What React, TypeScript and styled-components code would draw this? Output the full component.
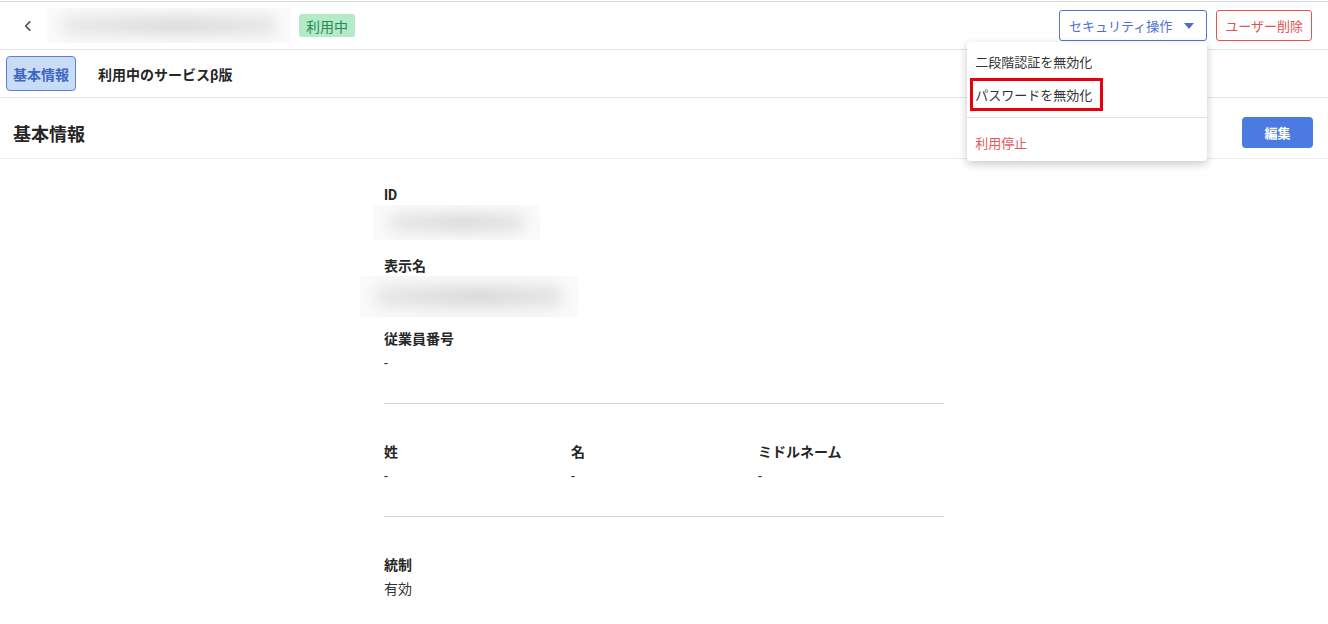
import styled, { createGlobalStyle } from 'styled-components'

const GlobalStyle = createGlobalStyle`
  html, body {
    margin: 0;
    padding: 0;
    background: #ffffff;
  }
  body {
    font-family: Roboto, "Noto Sans CJK JP", sans-serif;
    color: #2b2b2b;
  }
  * {
    box-sizing: border-box;
  }
`

const Page = styled.div`
  width: 1328px;
  height: 624px;
  overflow: hidden;
  padding-top: 1px;
  display: flex;
  flex-direction: column;
`

const Header = styled.header`
  height: 49px;
  flex-shrink: 0;
  display: flex;
  align-items: center;
  padding: 0 16px;
  border-top: 1px solid #d9d9d9;
  border-bottom: 1px solid #e3e3e3;
`

const BackButton = styled.button`
  width: 24px;
  height: 24px;
  display: flex;
  align-items: center;
  justify-content: center;
  border: none;
  padding: 0;
  background: transparent;
  color: #555;
  cursor: pointer;
`

// masked personal data: a soft grey smear on an off-white plate
const Blurred = styled.div<{ $width: number; $height: number }>`
  width: ${(p) => p.$width}px;
  height: ${(p) => p.$height}px;
  background: #fafafa;
  overflow: hidden;
  display: flex;
  align-items: center;
  padding: 0 14px;
  flex-shrink: 0;
`

const BlurInk = styled.div`
  flex: 1;
  height: 55%;
  border-radius: 12px;
  background: linear-gradient(90deg, #e8e8e8, #dadada 55%, #e6e6e6);
  filter: blur(7px);
`

const NameBlock = styled.div`
  margin-left: 7px;
`

const Badge = styled.span`
  margin-left: 8px;
  height: 23px;
  padding: 0 7px;
  display: inline-flex;
  align-items: center;
  border-radius: 3px;
  background: #b4eac8;
  color: #248a56;
  font-size: 14px;
`

const Spacer = styled.div`
  flex: 1;
`

const Actions = styled.div`
  display: flex;
  gap: 9px;
  align-items: center;
`

const MenuAnchor = styled.div`
  position: relative;
`

const OutlineButton = styled.button<{ $tone: 'blue' | 'red' }>`
  height: 31px;
  padding: 0 ${(p) => (p.$tone === 'blue' ? '12px 0 9px' : '8px')};
  display: flex;
  align-items: center;
  gap: 12px;
  border-radius: 3px;
  background: #fff;
  font-family: inherit;
  font-size: 13px;
  cursor: pointer;
  border: 1px solid ${(p) => (p.$tone === 'blue' ? '#5573d8' : '#e85454')};
  color: ${(p) => (p.$tone === 'blue' ? '#4d6fd2' : '#e25252')};
`

const Menu = styled.div`
  position: absolute;
  top: 32px;
  right: 0;
  width: 240px;
  background: #fff;
  border-radius: 4px;
  box-shadow: 0 3px 10px rgba(0, 0, 0, 0.22);
  padding: 3px 0 2px;
  z-index: 10;
`

const MenuItem = styled.div<{ $danger?: boolean }>`
  height: 33px;
  display: flex;
  align-items: center;
  padding: 0 8px;
  font-size: 13px;
  color: ${(p) => (p.$danger ? '#e25a5a' : '#333')};
`

const Highlight = styled.span`
  margin-left: -5px;
  padding: 4px 8px 4px 2px;
  border: 3px solid #e8000b;
`

const MenuDivider = styled.div`
  height: 1px;
  background: #e0e0e0;
  margin: 6px 0 8px;
`

const Tabs = styled.nav`
  height: 48px;
  flex-shrink: 0;
  display: flex;
  align-items: center;
  gap: 15px;
  padding: 0 6px;
  border-bottom: 1px solid #e6e6e6;
`

const Tab = styled.div<{ $active?: boolean }>`
  height: 35px;
  padding: 0 6px;
  display: flex;
  align-items: center;
  border-radius: 4px;
  font-size: 14px;
  font-weight: 700;
  border: 1px solid ${(p) => (p.$active ? '#5b80d6' : 'transparent')};
  background: ${(p) => (p.$active ? '#c9dcf5' : 'transparent')};
  color: ${(p) => (p.$active ? '#3f66c2' : '#262626')};
`

const SectionHeader = styled.div`
  height: 61px;
  flex-shrink: 0;
  display: flex;
  align-items: center;
  justify-content: space-between;
  padding: 9px 15px 0 13px;
  border-bottom: 1px solid #ebebeb;
`

const SectionTitle = styled.h2`
  margin: 0;
  font-size: 18px;
  font-weight: 700;
  color: #262626;
`

const PrimaryButton = styled.button`
  width: 71px;
  height: 31px;
  border: none;
  border-radius: 4px;
  background: #4b7be0;
  color: #fff;
  font-family: inherit;
  font-size: 13px;
  font-weight: 700;
  cursor: pointer;
`

const Body = styled.main`
  display: flex;
  justify-content: center;
`

const Column = styled.div`
  width: 560px;
`

const Group = styled.section<{ $first?: boolean; $last?: boolean }>`
  display: flex;
  flex-direction: column;
  gap: 29px;
  padding: ${(p) => (p.$first ? '26px' : '38px')} 0 31px;
  border-bottom: ${(p) => (p.$last ? 'none' : '1px solid #d3d3d3')};
`

const Row = styled.div`
  display: grid;
  grid-template-columns: repeat(3, 187px);
`

const Field = styled.div`
  display: flex;
  flex-direction: column;
  gap: 3px;
`

const Label = styled.div`
  font-size: 14px;
  line-height: 20px;
  font-weight: 700;
  color: #262626;
`

const Value = styled.div`
  font-size: 14px;
  line-height: 20px;
  padding-top: 1px;
  margin-bottom: -1px;
  color: #333;
`

const BlurValue = styled.div<{ $shift: number; $pull: number }>`
  margin: -3px 0 ${(p) => p.$pull}px ${(p) => p.$shift}px;
`

function Chevron() {
  return (
    <svg width="14" height="14" viewBox="0 0 24 24" fill="none" stroke="currentColor" strokeWidth="3" strokeLinecap="round" strokeLinejoin="round">
      <polyline points="15 5 8 12 15 19" />
    </svg>
  )
}

function Caret() {
  return (
    <svg width="10" height="6" viewBox="0 0 10 6">
      <path d="M0 0 L10 0 L5 6 Z" fill="currentColor" />
    </svg>
  )
}

export default function App() {
  return (
    <>
      <GlobalStyle />
      <Page>
        <Header>
          <BackButton>
            <Chevron />
          </BackButton>
          <NameBlock>
            <Blurred $width={244} $height={35}>
              <BlurInk />
            </Blurred>
          </NameBlock>
          <Badge>利用中</Badge>
          <Spacer />
          <Actions>
            <MenuAnchor>
              <OutlineButton $tone="blue">
                セキュリティ操作
                <Caret />
              </OutlineButton>
              <Menu>
                <MenuItem>二段階認証を無効化</MenuItem>
                <MenuItem>
                  <Highlight>パスワードを無効化</Highlight>
                </MenuItem>
                <MenuDivider />
                <MenuItem $danger>利用停止</MenuItem>
              </Menu>
            </MenuAnchor>
            <OutlineButton $tone="red">ユーザー削除</OutlineButton>
          </Actions>
        </Header>

        <Tabs>
          <Tab $active>基本情報</Tab>
          <Tab>利用中のサービスβ版</Tab>
        </Tabs>

        <SectionHeader>
          <SectionTitle>基本情報</SectionTitle>
          <PrimaryButton>編集</PrimaryButton>
        </SectionHeader>

        <Body>
          <Column>
            <Group $first>
              <Field>
                <Label>ID</Label>
                <BlurValue $shift={-11} $pull={-13}>
                  <Blurred $width={167} $height={35}>
                    <BlurInk />
                  </Blurred>
                </BlurValue>
              </Field>
              <Field>
                <Label>表示名</Label>
                <BlurValue $shift={-24} $pull={-17}>
                  <Blurred $width={218} $height={41}>
                    <BlurInk />
                  </Blurred>
                </BlurValue>
              </Field>
              <Field>
                <Label>従業員番号</Label>
                <Value>-</Value>
              </Field>
            </Group>
            <Group>
              <Row>
                <Field>
                  <Label>姓</Label>
                  <Value>-</Value>
                </Field>
                <Field>
                  <Label>名</Label>
                  <Value>-</Value>
                </Field>
                <Field>
                  <Label>ミドルネーム</Label>
                  <Value>-</Value>
                </Field>
              </Row>
            </Group>
            <Group $last>
              <Field>
                <Label>統制</Label>
                <Value>有効</Value>
              </Field>
            </Group>
          </Column>
        </Body>
      </Page>
    </>
  )
}
